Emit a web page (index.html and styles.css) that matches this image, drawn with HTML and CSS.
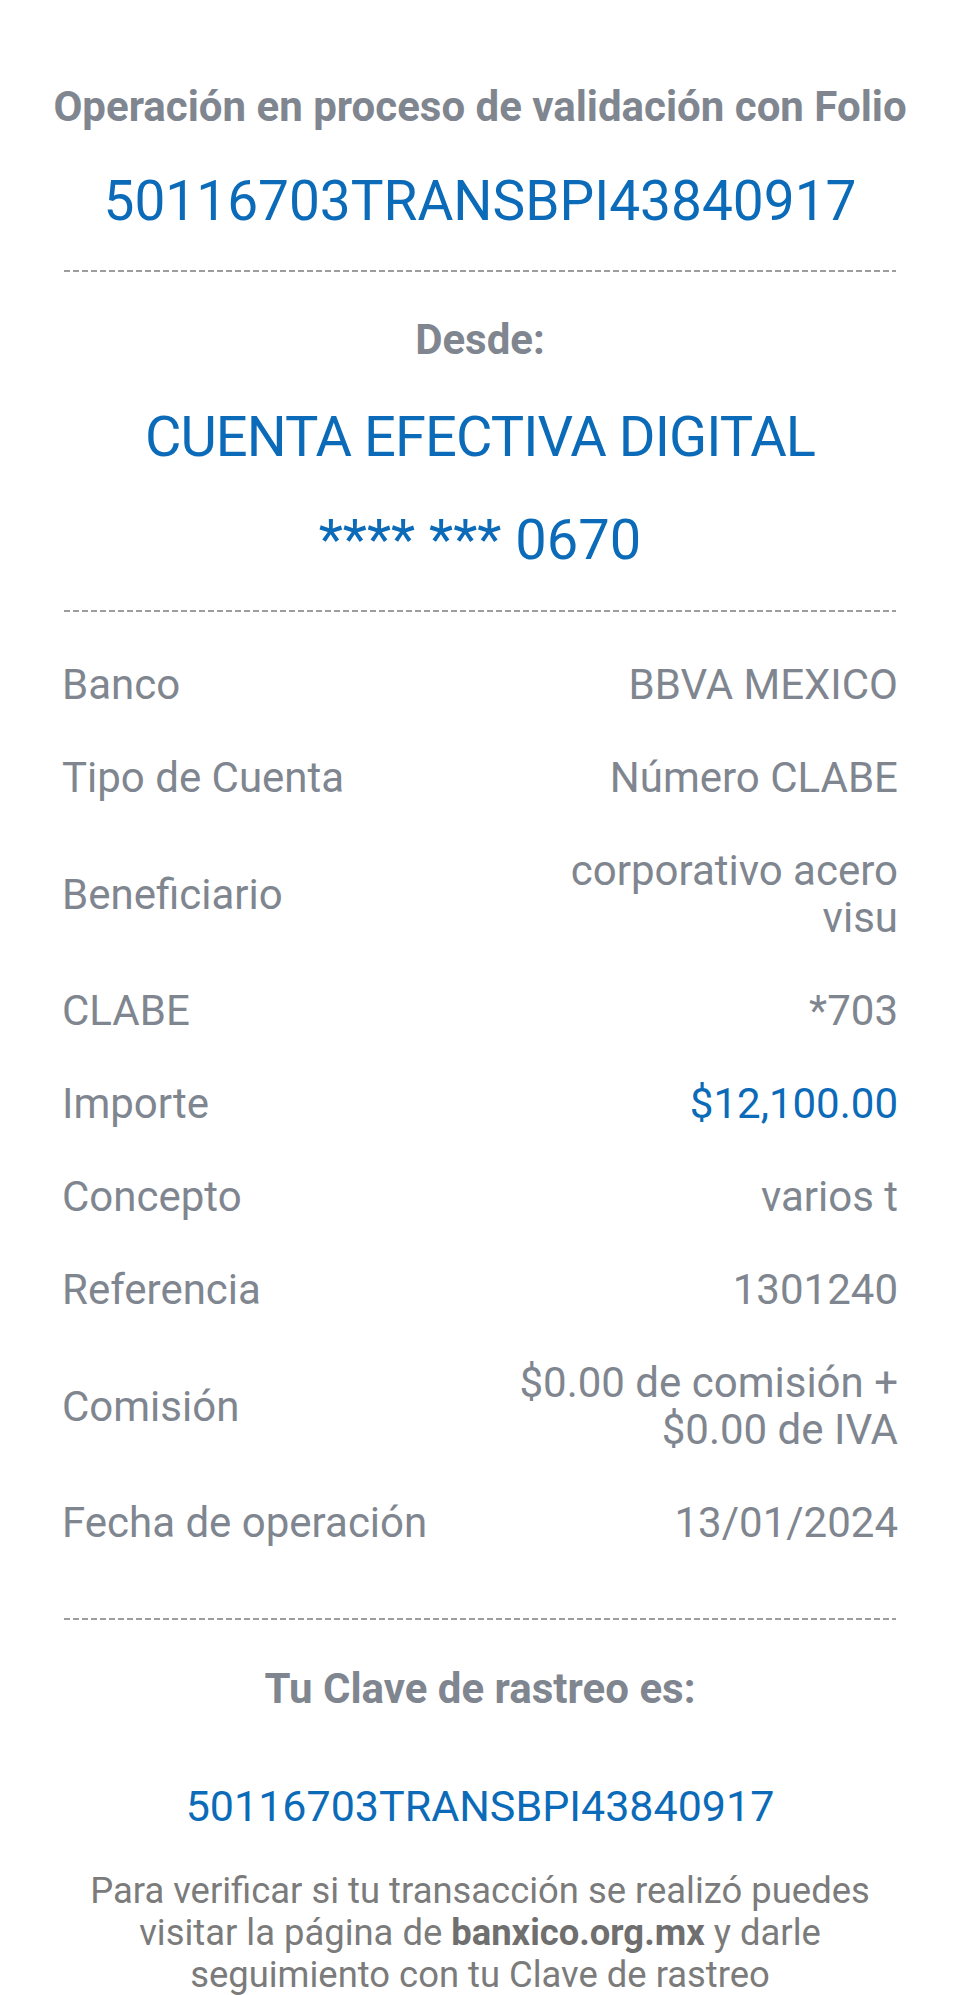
FILE: index.html
```html
<!DOCTYPE html>
<html lang="es">
<head>
<meta charset="utf-8">
<title>Comprobante</title>
<link rel="stylesheet" href="styles.css">
</head>
<body>
<main class="receipt">
  <h1 class="title">Operación en proceso de validación con Folio</h1>
  <p class="folio">50116703TRANSBPI43840917</p>
  <div class="divider divider-1"></div>

  <h2 class="subtitle">Desde:</h2>
  <p class="account-name">CUENTA EFECTIVA DIGITAL</p>
  <p class="account-number">**** *** 0670</p>
  <div class="divider divider-2"></div>

  <dl class="details">
    <div class="row"><dt>Banco</dt><dd>BBVA MEXICO</dd></div>
    <div class="row"><dt>Tipo de Cuenta</dt><dd>Número CLABE</dd></div>
    <div class="row"><dt>Beneficiario</dt><dd>corporativo acero visu</dd></div>
    <div class="row"><dt>CLABE</dt><dd>*703</dd></div>
    <div class="row"><dt>Importe</dt><dd class="amount">$12,100.00</dd></div>
    <div class="row"><dt>Concepto</dt><dd>varios t</dd></div>
    <div class="row"><dt>Referencia</dt><dd>1301240</dd></div>
    <div class="row"><dt>Comisión</dt><dd>$0.00 de comisión + $0.00 de IVA</dd></div>
    <div class="row"><dt>Fecha de operación</dt><dd>13/01/2024</dd></div>
  </dl>
  <div class="divider divider-3"></div>

  <h2 class="subtitle tracking-title">Tu Clave de rastreo es:</h2>
  <p class="tracking">50116703TRANSBPI43840917</p>
  <p class="note">Para verificar si tu transacción se realizó puedes visitar la página de <strong>banxico.org.mx</strong> y darle seguimiento con tu Clave de rastreo</p>
</main>
</body>
</html>
```

FILE: styles.css
```css
* { box-sizing: border-box; }

html, body {
  margin: 0;
  padding: 0;
  background: #ffffff;
}

body {
  font-family: Roboto, "Liberation Sans", Arial, sans-serif;
  color: #7f858e;
}

.receipt {
  width: 960px;
  min-height: 1995px;
  padding: 83px 62px 0;
  display: flex;
  flex-direction: column;
  overflow: hidden;
}

.title {
  margin: 0 -40px;
  font-size: 42px;
  line-height: 48px;
  font-weight: 700;
  text-align: center;
  color: #80868f;
  white-space: nowrap;
}

.folio {
  margin: 38px 0 0;
  font-size: 55px;
  line-height: 64px;
  font-weight: 400;
  text-align: center;
  color: #0b6bb8;
}

.divider {
  height: 2px;
  margin: 0 2px;
  background: repeating-linear-gradient(to right, #9d9d9d 0 6px, transparent 6px 9px);
}

.divider-1 { margin-top: 37px; }

.subtitle {
  margin: 44px 0 0;
  font-size: 42px;
  line-height: 48px;
  font-weight: 700;
  text-align: center;
  color: #80868f;
}

.account-name {
  margin: 41px 0 0;
  font-size: 56px;
  line-height: 64px;
  font-weight: 400;
  letter-spacing: -0.9px;
  text-align: center;
  color: #0b6bb8;
}

.account-number {
  margin: 39px 0 0;
  font-size: 56px;
  line-height: 64px;
  font-weight: 400;
  text-align: center;
  color: #0b6bb8;
}

.divider-2 { margin-top: 38px; }

.details {
  margin: 49px 0 0;
  display: flex;
  flex-direction: column;
  gap: 46px;
}

.row {
  display: grid;
  grid-template-columns: 1fr 1fr;
  column-gap: 40px;
  align-items: center;
  font-size: 42px;
  line-height: 47px;
}

.row dt {
  margin: 0;
  color: #80868f;
}

.row dd {
  margin: 0;
  text-align: right;
  color: #80868f;
}

.row dd.amount {
  color: #0b6bb8;
}

.divider-3 { margin-top: 72px; }

.tracking-title { margin-top: 45px; }

.tracking {
  margin: 67px 0 0;
  font-size: 43px;
  line-height: 52px;
  font-weight: 400;
  text-align: center;
  color: #0b6bb8;
}

.note {
  margin: 38px 0 0;
  padding: 0 20px;
  font-size: 36.4px;
  line-height: 42px;
  text-align: center;
  color: #7b7b7b;
}

.note strong {
  font-weight: 700;
  color: #6f6f6f;
}
```
